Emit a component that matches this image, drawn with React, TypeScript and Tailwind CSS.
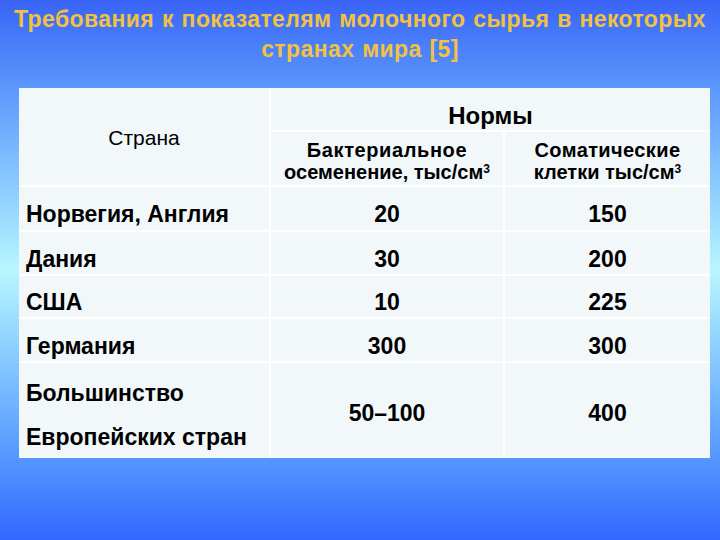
const rows = [
  { country: "Норвегия, Англия", bact: "20", soma: "150", h: "h-[43px]" },
  { country: "Дания", bact: "30", soma: "200", h: "h-[42px]" },
  { country: "США", bact: "10", soma: "225", h: "h-[41px]" },
  { country: "Германия", bact: "300", soma: "300", h: "h-[42px]" },
];

export default function App() {
  return (
    <div
      className="flex h-[540px] w-[720px] flex-col overflow-hidden bg-linear-to-b from-[#3a63f6] via-[#b8f6ff] to-[#3366ff]"
      style={{ fontFamily: '"Liberation Sans", Arial, sans-serif' }}
    >
      {/* Title */}
      <h1 className="pt-[4px] text-center text-[23px] leading-[30px] font-bold tracking-[0.4px] text-[#f2c23e] [word-spacing:1px]">
        Требования к показателям молочного сырья в некоторых
        <br />
        странах мира [5]
      </h1>

      {/* Table */}
      <div className="mt-[24px] ml-[19px] grid w-[691px] grid-cols-[250px_232px_205px] gap-[2px] bg-white text-black">
        <div className="row-span-2 flex items-center justify-center bg-[#f2f7fa] pt-[3px] text-[21px]">
          Страна
        </div>
        <div className="col-span-2 flex h-[42px] items-center justify-center bg-[#f2f7fa] pt-[14px] text-[24px] font-bold">
          Нормы
        </div>
        <div className="flex h-[53px] flex-col items-center justify-center bg-[#f2f7fa] pt-[5px] text-[20px] leading-[22px] font-bold">
          <span className="tracking-[0.6px]">Бактериальное</span>
          <span>
            осеменение, тыс/см<sup className="text-[12px]">3</sup>
          </span>
        </div>
        <div className="flex h-[53px] flex-col items-center justify-center bg-[#f2f7fa] pt-[5px] text-[20px] leading-[22px] font-bold">
          <span className="tracking-[0.4px]">Соматические</span>
          <span>
            клетки тыс/см<sup className="text-[12px]">3</sup>
          </span>
        </div>

        {rows.map((r) => (
          <div key={r.country} className="contents">
            <div className={`flex items-center bg-[#f2f7fa] pt-[11px] pl-[7px] text-[23px] leading-[26px] font-bold ${r.h}`}>
              {r.country}
            </div>
            <div className="flex items-center justify-center bg-[#f2f7fa] pt-[11px] text-[23px] leading-[26px] font-bold">
              {r.bact}
            </div>
            <div className="flex items-center justify-center bg-[#f2f7fa] pt-[11px] text-[23px] leading-[26px] font-bold">
              {r.soma}
            </div>
          </div>
        ))}

        <div className="flex h-[95px] flex-col justify-center gap-[22px] bg-[#f2f7fa] pt-[9px] pl-[7px] text-[23px] leading-[22px] font-bold">
          <span>Большинство</span>
          <span>Европейских стран</span>
        </div>
        <div className="flex items-center justify-center bg-[#f2f7fa] pt-[5px] text-[23px] font-bold">
          50–100
        </div>
        <div className="flex items-center justify-center bg-[#f2f7fa] pt-[5px] text-[23px] font-bold">
          400
        </div>
      </div>
    </div>
  );
}
